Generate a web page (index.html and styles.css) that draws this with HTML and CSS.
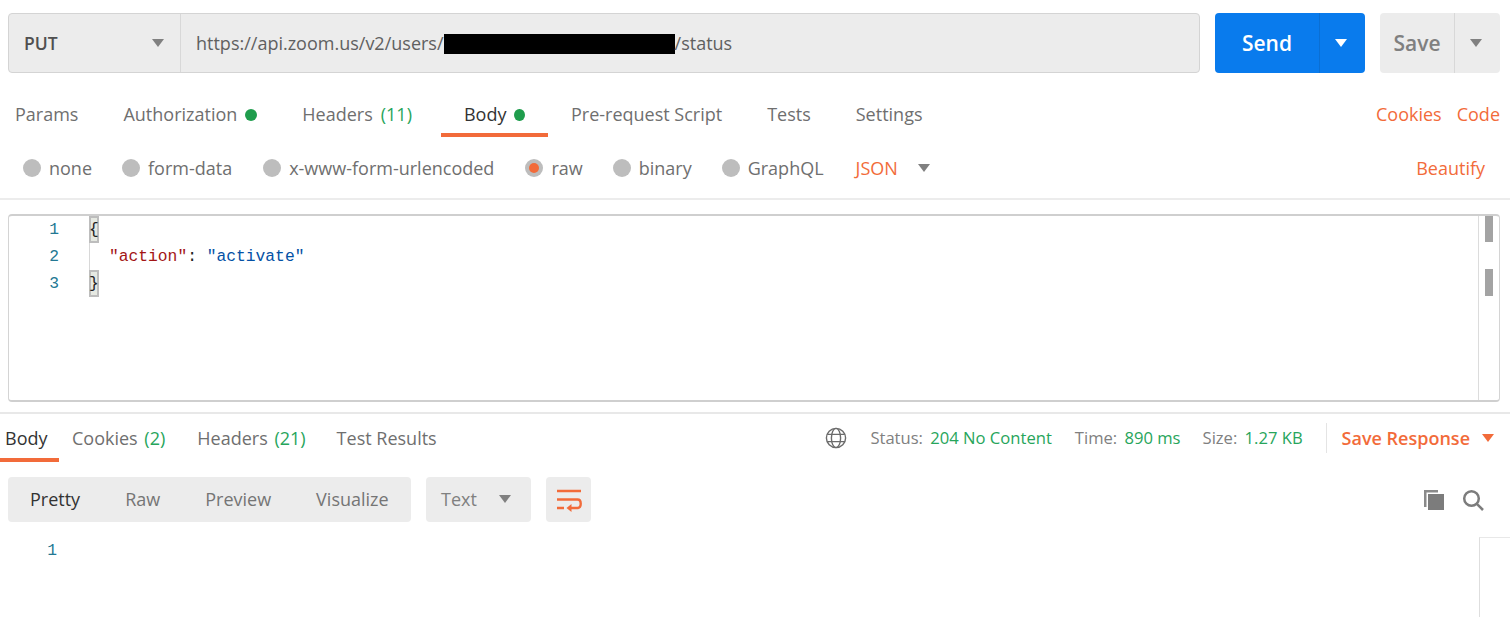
FILE: index.html
```html
<!DOCTYPE html>
<html lang="en">
<head>
<meta charset="utf-8">
<title>PUT request</title>
<link rel="stylesheet" href="styles.css">
</head>
<body>
<main class="page">
  <section class="urlbar">
    <div class="urlgroup">
      <div class="method"><span>PUT</span><i class="caret caret-grey"></i></div>
      <div class="url"><span>https://api.zoom.us/v2/users/</span><span class="redact"></span><span>/status</span></div>
    </div>
    <div class="split send"><span class="split-main">Send</span><span class="split-side"><i class="caret caret-white"></i></span></div>
    <div class="split save"><span class="split-main">Save</span><span class="split-side"><i class="caret caret-grey"></i></span></div>
  </section>

  <nav class="reqtabs">
    <a class="tab t-params">Params</a>
    <a class="tab t-auth">Authorization<i class="dot"></i></a>
    <a class="tab t-headers">Headers <em>(11)</em></a>
    <a class="tab t-body active">Body<i class="dot"></i></a>
    <a class="tab t-pre">Pre-request Script</a>
    <a class="tab t-tests">Tests</a>
    <a class="tab t-settings">Settings</a>
    <span class="spacer"></span>
    <a class="link">Cookies</a>
    <a class="link link-code">Code</a>
  </nav>

  <div class="bodyopts">
    <label class="radio r-none"><i class="circle"></i>none</label>
    <label class="radio r-form"><i class="circle"></i>form-data</label>
    <label class="radio r-url"><i class="circle"></i>x-www-form-urlencoded</label>
    <label class="radio r-raw"><i class="circle on"></i>raw</label>
    <label class="radio r-bin"><i class="circle"></i>binary</label>
    <label class="radio r-gql"><i class="circle"></i>GraphQL</label>
    <span class="json">JSON</span><i class="caret caret-grey json-caret"></i>
    <span class="spacer"></span>
    <a class="beautify">Beautify</a>
  </div>

  <section class="editor">
    <div class="gutter"><span>1</span><span>2</span><span>3</span></div>
    <div class="code">
      <div class="line"><b class="brace">{</b></div>
      <div class="line indent"><span class="key">"action"</span><span class="colon">: </span><span class="str">"activate"</span></div>
      <div class="line"><b class="brace">}</b></div>
    </div>
    <div class="overview"><i class="mark mark-a"></i><i class="mark mark-b"></i></div>
  </section>

  <section class="response">
    <nav class="restabs">
      <a class="rtab r-body active">Body</a>
      <a class="rtab r-cookies">Cookies <em>(2)</em></a>
      <a class="rtab r-headers">Headers <em>(21)</em></a>
      <a class="rtab r-tests">Test Results</a>
      <span class="spacer"></span>
      <svg class="globe" viewBox="0 0 22 22" width="22" height="22" fill="none" stroke="#6b6b6b" stroke-width="1.4"><circle cx="11" cy="11" r="9.6"/><ellipse cx="11" cy="11" rx="4.6" ry="9.6"/><path d="M2.2 7.4h17.6M2.2 14.6h17.6"/></svg>
      <span class="meta">Status: <em>204 No Content</em></span>
      <span class="meta m-time">Time: <em>890 ms</em></span>
      <span class="meta m-size">Size: <em>1.27 KB</em></span>
      <span class="saveresp">Save Response<i class="caret caret-orange"></i></span>
    </nav>
    <div class="toolbar">
      <div class="modes"><span class="mode current">Pretty</span><span class="mode m-raw">Raw</span><span class="mode m-prev">Preview</span><span class="mode m-vis">Visualize</span></div>
      <div class="format"><span>Text</span><i class="caret caret-grey"></i></div>
      <div class="wrap">
        <svg viewBox="0 0 26 24" width="26" height="24" fill="none" stroke="#f26b3a" stroke-width="2.4"><path d="M1 3h24M1 11.5h20.5c4.3 0 4.3 8.500 0 8.500H13M1 20h7"/><path d="M15.500 16v8L10.500 20z" fill="#f26b3a" stroke="none"/></svg>
      </div>
      <span class="spacer"></span>
      <svg class="copy" viewBox="0 0 22 22" width="22" height="22"><path d="M1 1h14v2.500H3.500V18H1z" fill="#8a8a8a"/><rect x="5" y="5" width="16" height="16" fill="#7c7c7c"/></svg>
      <svg class="search" viewBox="0 0 22 22" width="22" height="22" fill="none" stroke="#7c7c7c" stroke-width="2.500"><circle cx="9.500" cy="9.500" r="7.300"/><path d="M14.800 14.800L21 21"/></svg>
    </div>
    <div class="output">
      <span class="outnum">1</span>
      <span class="spacer"></span>
      <div class="outrail"></div>
    </div>
  </section>
</main>
</body>
</html>
```
FILE: styles.css
```css
* { box-sizing: border-box; }
html, body { margin: 0; padding: 0; background: #fff; overflow: hidden; }
body { font-family: "Open Sans", "Noto Sans", sans-serif; font-size: 18px; color: #6f6f6f; }
em { font-style: normal; color: #27a55b; }
a { display: block; }
i { display: block; }
.page { width: 1510px; height: 617px; overflow: hidden; }
.spacer { flex: 1; }

.caret { width: 0; height: 0; border-left: 6.500px solid transparent; border-right: 6.500px solid transparent; border-top: 8px solid #808080; }
.caret-white { border-top-color: #fff; }
.caret-orange { border-top-color: #f26b3a; }

.urlbar { display: flex; height: 60px; margin: 13px 10px 0 8px; }
.urlgroup { display: flex; width: 1192px; background: #ececec; border: 1px solid #d4d4d4; border-radius: 4px; }
.method { display: flex; align-items: center; justify-content: space-between; width: 172px; padding: 0 16px 0 15px; border-right: 1px solid #d8d8d8; color: #505050; font-weight: 600; font-size: 17.500px; }
.url { display: flex; align-items: center; padding-left: 15px; color: #606060; font-size: 18px; }
.redact { width: 231px; height: 20px; background: #000; margin-top: 1px; }
.split { display: flex; align-items: center; height: 60px; border-radius: 4px; font-weight: 600; font-size: 21px; }
.split-main { display: flex; align-items: center; justify-content: center; height: 100%; }
.split-side { display: flex; align-items: center; justify-content: center; height: 100%; padding-right: 3px; }
.send { width: 150px; margin-left: 15px; background: #097bed; color: #fff; }
.send .split-main { width: 105px; border-right: 1px solid #0a6fd4; }
.send .split-side { width: 45px; }
.save { width: 120px; margin-left: 15px; background: #ececec; color: #808080; }
.save .split-main { width: 75px; border-right: 1px solid #d8d8d8; }
.save .split-side { width: 45px; }

.reqtabs { display: flex; height: 47px; margin-top: 17px; padding-right: 10px; }
.tab { display: flex; align-items: flex-start; height: 47px; padding: 10px 0 0; line-height: 28px; color: #6f6f6f; white-space: nowrap; }
.t-params { margin-left: 15px; }
.t-auth { margin-left: 45px; }
.t-headers { margin-left: 45px; }
.t-headers em { margin-left: 8px; }
.t-body { margin-left: 29px; padding: 10px 23px 0; border-bottom: 4px solid #f26b3a; color: #333; width: 107px; }
.t-pre { margin-left: 23px; }
.t-tests { margin-left: 45px; }
.t-settings { margin-left: 45px; }
.dot { width: 12px; height: 12px; margin: 9px 0 0 8px; border-radius: 50%; background: #1f9d4d; }
.link { color: #f26b3a; padding-top: 10px; line-height: 28px; }
.link-code { margin-left: 15px; }

.bodyopts { display: flex; align-items: center; height: 63px; padding-right: 25px; border-bottom: 2px solid #ececec; }
.radio { display: flex; align-items: center; white-space: nowrap; color: #6f6f6f; line-height: 28px; }
.circle { width: 18px; height: 18px; margin-right: 8px; border-radius: 50%; background: #bdbdbd; }
.circle.on { display: flex; align-items: center; justify-content: center; }
.circle.on::after { content: ""; width: 10px; height: 10px; border-radius: 50%; background: #f26b3a; }
.r-none { margin-left: 23px; }
.r-form { margin-left: 30px; }
.r-url { margin-left: 31px; }
.r-raw { margin-left: 31px; }
.r-bin { margin-left: 30px; }
.r-gql { margin-left: 30px; }
.json { margin-left: 32px; color: #f26b3a; }
.json-caret { margin-left: 20px; }
.beautify { color: #f26b3a; }

.editor { display: flex; height: 188px; margin: 14px 10px 0 8px; border: 1px solid #d4d4d4; border-top: 2px solid #cfcfcf; border-bottom: 2px solid #cfcfcf; border-radius: 4px; }
.gutter { display: flex; flex-direction: column; width: 50px; font-family: "Liberation Mono", monospace; font-size: 16.300px; color: #237893; text-align: right; }
.gutter span { display: block; height: 27px; line-height: 28px; }
.code { flex: 1; margin-left: 30px; font-family: "Liberation Mono", monospace; font-size: 16.300px; }
.line { height: 27px; line-height: 28px; color: #222; white-space: pre; }
.indent { padding-left: 19px; border-left: 1px solid #d8d8d8; }
.brace { display: inline-block; width: 10px; height: 27px; background: #e6e9e2; border: 2px solid #bdbdbd; font-weight: 400; line-height: 24px; text-indent: -2px; color: #222; vertical-align: top; }
.key { color: #a31515; }
.colon { color: #222; }
.str { color: #0451a5; }
.overview { display: flex; flex-direction: column; width: 21px; border-left: 1px solid #dcdcdc; padding-left: 6px; }
.mark { width: 8px; background: #a3a3a3; }
.mark-a { height: 26px; }
.mark-b { height: 27px; margin-top: 27px; }

.response { margin-top: 10px; border-top: 2px solid #e8e8e8; }
.restabs { display: flex; align-items: flex-start; height: 48px; padding-right: 16px; }
.rtab { height: 48px; padding-top: 10px; line-height: 28px; color: #6f6f6f; white-space: nowrap; }
.rtab em { margin-left: 2px; }
.rtab.r-body { width: 59px; padding-left: 5px; color: #333; border-bottom: 4px solid #f26b3a; }
.rtab.r-cookies { margin-left: 13px; }
.rtab.r-headers { margin-left: 32px; }
.rtab.r-tests { margin-left: 31px; }
.globe { margin-top: 13px; }
.meta { margin-left: 23px; padding-top: 12px; font-size: 16.600px; line-height: 24px; color: #808080; white-space: nowrap; }
.meta em { margin-left: 3px; }
.m-size { margin-left: 22px; }
.saveresp { display: flex; align-items: center; height: 30px; margin: 9px 0 0 23px; padding-left: 15px; border-left: 1px solid #e4e4e4; color: #f26b3a; font-weight: 600; white-space: nowrap; }
.saveresp .caret { margin-left: 12px; }

.toolbar { display: flex; align-items: center; height: 45px; margin-top: 15px; padding: 0 26px 0 8px; }
.modes { display: flex; align-items: center; width: 403px; height: 45px; padding-bottom: 2px; background: #ececec; border-radius: 4px; }
.mode { white-space: nowrap; color: #757575; }
.mode.current { margin-left: 22px; color: #333; }
.m-raw { margin-left: 45px; }
.m-prev { margin-left: 45px; }
.m-vis { margin-left: 45px; }
.format { display: flex; align-items: center; justify-content: space-between; width: 105px; height: 45px; margin-left: 15px; padding: 0 20px 2px 15px; background: #ececec; border-radius: 4px; color: #808080; }
.wrap { display: flex; align-items: center; justify-content: center; width: 45px; height: 45px; margin-left: 15px; background: #ececec; border-radius: 4px; }
.search { margin-left: 17px; }

.output { display: flex; height: 80px; margin-top: 15px; }
.outnum { width: 57px; text-align: right; font-family: "Liberation Mono", monospace; font-size: 16.300px; line-height: 27px; color: #237893; }
.outrail { width: 31px; height: 80px; border-left: 1px solid #dedede; border-top: 1px solid #e8e8e8; }
```
